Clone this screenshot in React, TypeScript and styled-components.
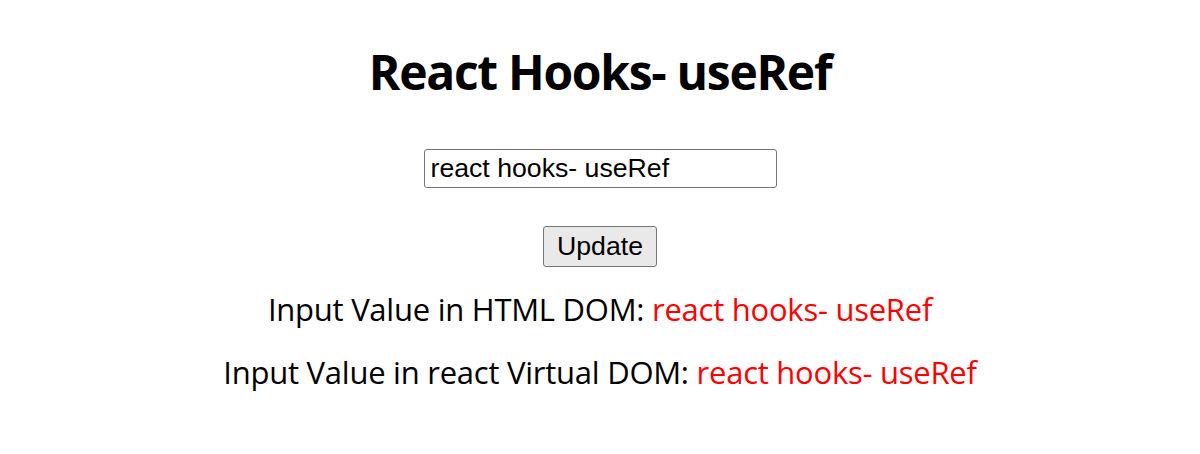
import React, { useRef, useState } from "react";
import styled, { createGlobalStyle } from "styled-components";

const Global = createGlobalStyle`
  html, body { margin: 0; padding: 0; background: #fff; }
  body { font-family: "Open Sans", "Noto Sans", sans-serif; color: #000; }
`;

const Page = styled.div`
  display: flex;
  flex-direction: column;
  align-items: center;
  padding-top: 42px;
`;

const Title = styled.h1`
  margin: 0;
  font-size: 48px;
  font-weight: 700;
  line-height: 60px;
  letter-spacing: -1.3px;
`;

const TextInput = styled.input`
  margin-top: 47px;
  width: 353px;
  height: 39px;
  box-sizing: border-box;
  border: 1.5px solid #767676;
  border-radius: 3px;
  padding: 0 5px 0 6px;
  font-family: "Liberation Sans", Arial, sans-serif;
  font-size: 26.67px;
  color: #000;
  outline: none;
`;

const Button = styled.button`
  margin-top: 38px;
  height: 41px;
  padding: 0 13.5px;
  box-sizing: border-box;
  background: #e9e9e9;
  border: 1.5px solid #767676;
  border-radius: 3px;
  font-family: "Liberation Sans", Arial, sans-serif;
  font-size: 26.67px;
  color: #000;
`;

const Line = styled.p`
  margin: 21px 0 0;
  font-size: 31px;
  line-height: 42px;
  letter-spacing: -0.25px;
`;

const Value = styled.span`
  color: #ff0000;
`;

export default function App() {
  const inputRef = useRef<HTMLInputElement>(null);
  const [value, setValue] = useState("react hooks- useRef");
  const [domValue, setDomValue] = useState("react hooks- useRef");
  return (
    <>
      <Global />
      <Page>
        <Title>React Hooks- useRef</Title>
        <TextInput
          ref={inputRef}
          value={value}
          onChange={(e) => setValue(e.target.value)}
        />
        <Button onClick={() => setDomValue(inputRef.current?.value ?? "")}>Update</Button>
        <Line>
          Input Value in HTML DOM: <Value>{domValue}</Value>
        </Line>
        <Line>
          Input Value in react Virtual DOM: <Value>{value}</Value>
        </Line>
      </Page>
    </>
  );
}
